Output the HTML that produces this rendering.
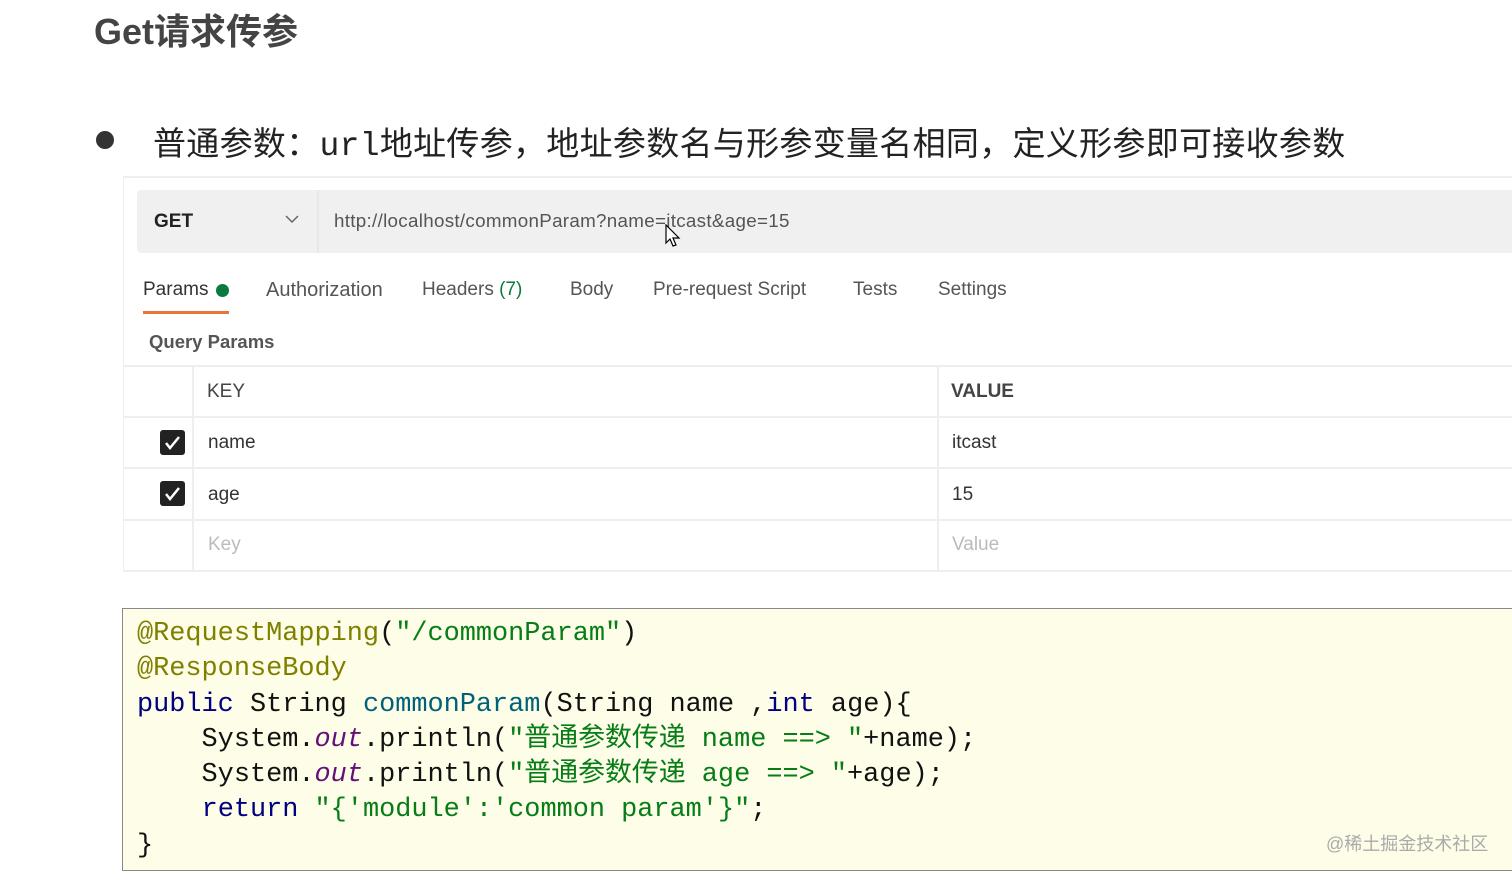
<!DOCTYPE html>
<html><head><meta charset="utf-8"><style>
*{margin:0;padding:0;box-sizing:border-box}
body{width:1512px;height:876px;background:#fff;position:relative;overflow:hidden;font-family:"Liberation Sans","Noto Sans CJK SC",sans-serif}
.a{position:absolute;white-space:nowrap}
.t{font-size:19px;color:#555}
.code{font-family:"Liberation Mono","Noto Sans CJK SC",monospace;font-size:26.9px;color:#111}
.ann{color:#808000}.kw{color:#000080}.str{color:#067d17}.fn{color:#00627a}.it{color:#660e7a;font-style:italic}
</style></head><body>
<div class="a" style="left:94px;top:3px;font-size:36px;font-weight:bold;color:#444">Get请求传参</div>
<div class="a" style="left:96px;top:131px;width:18px;height:18px;border-radius:50%;background:#333"></div>
<div class="a" style="left:153px;top:117px;font-size:33px;letter-spacing:0.3px;color:#222">普通参数：<span style="font-family:'Liberation Mono',monospace">url</span>地址传参，地址参数名与形参变量名相同，定义形参即可接收参数</div>
<div class="a" style="left:123px;top:176px;width:1389px;height:396px;border-top:2px solid #eee;border-left:1px solid #eee"></div>
<div class="a" style="left:137px;top:190px;width:1375px;height:63px;background:#f0f0f0;border-radius:4px 0 0 4px"></div>
<div class="a" style="left:317px;top:190px;width:2px;height:63px;background:#e8e8e8"></div>
<div class="a" style="left:154px;top:211px;font-size:19px;color:#222;font-weight:bold">GET</div>
<svg class="a" style="left:285px;top:214px" width="14" height="10"><path d="M1 2l6 6 6-6" fill="none" stroke="#666" stroke-width="1.5"/></svg>
<div class="a t" style="left:334px;top:210px;color:#555;font-size:18.8px;letter-spacing:0.3px">http://localhost/commonParam?name=itcast&amp;age=15</div>
<svg class="a" style="left:665px;top:224px" width="16" height="24"><path d="M1 1v18l4-4 3 7 3-1-3-7h6z" fill="#fff" stroke="#000" stroke-width="1.2"/></svg>
<div class="a t" style="left:143px;top:279px;color:#333">Params</div>
<div class="a" style="left:216px;top:284px;width:13px;height:13px;border-radius:50%;background:#0a7a3e"></div>
<div class="a" style="left:143px;top:311px;width:86px;height:3px;background:#e8743b"></div>
<div class="a t" style="left:266px;top:279px;font-size:20px">Authorization</div>
<div class="a t" style="left:422px;top:279px">Headers <span style="color:#0a7a3e">(7)</span></div>
<div class="a t" style="left:570px;top:279px">Body</div>
<div class="a t" style="left:653px;top:279px">Pre-request Script</div>
<div class="a t" style="left:853px;top:279px">Tests</div>
<div class="a t" style="left:938px;top:279px">Settings</div>
<div class="a t" style="left:149px;top:331px;color:#444;font-weight:bold;font-size:18.5px;color:#555">Query Params</div>
<div class="a" style="left:123px;top:365px;width:1389px;height:207px;border-top:2px solid #eee;border-bottom:2px solid #eee"></div>
<div class="a" style="left:123px;top:416px;width:1389px;height:2px;background:#eee"></div>
<div class="a" style="left:123px;top:467px;width:1389px;height:2px;background:#eee"></div>
<div class="a" style="left:123px;top:519px;width:1389px;height:2px;background:#eee"></div>
<div class="a" style="left:192px;top:365px;width:2px;height:207px;background:#eee"></div>
<div class="a" style="left:937px;top:365px;width:2px;height:207px;background:#eee"></div>
<div class="a t" style="left:207px;top:381px;color:#444">KEY</div>
<div class="a t" style="left:951px;top:381px;color:#444;font-weight:bold">VALUE</div>
<svg class="a" style="left:159px;top:429px" width="27" height="27"><rect x="1" y="1" width="25" height="25" rx="3" fill="#222"/><path d="M7 14l4 5 9-11" fill="none" stroke="#fff" stroke-width="2.5"/></svg>
<svg class="a" style="left:159px;top:480px" width="27" height="27"><rect x="1" y="1" width="25" height="25" rx="3" fill="#222"/><path d="M7 14l4 5 9-11" fill="none" stroke="#fff" stroke-width="2.5"/></svg>
<div class="a t" style="left:208px;top:432px;color:#333">name</div>
<div class="a t" style="left:952px;top:432px;color:#333">itcast</div>
<div class="a t" style="left:208px;top:484px;color:#333">age</div>
<div class="a t" style="left:952px;top:484px;color:#333">15</div>
<div class="a t" style="left:208px;top:534px;color:#bbb">Key</div>
<div class="a t" style="left:952px;top:534px;color:#bbb">Value</div>
<div class="a" style="left:122px;top:608px;width:1400px;height:263px;background:#fdfde8;border:1.5px solid #888"></div>
<div class="a code" style="left:137px;top:617px;line-height:35.3px;white-space:pre"><span class="ann">@RequestMapping</span>(<span class="str">"/commonParam"</span>)
<span class="ann">@ResponseBody</span>
<span class="kw">public</span> String <span class="fn">commonParam</span>(String name ,<span class="kw">int</span> age){
    System.<span class="it">out</span>.println(<span class="str">"普通参数传递 name ==&gt; "</span>+name);
    System.<span class="it">out</span>.println(<span class="str">"普通参数传递 age ==&gt; "</span>+age);
    <span class="kw">return</span> <span class="str">"{'module':'common param'}"</span>;
}</div>
<div class="a" style="left:1326px;top:830px;font-size:18px;color:#aaa">@稀土掘金技术社区</div>
</body></html>
